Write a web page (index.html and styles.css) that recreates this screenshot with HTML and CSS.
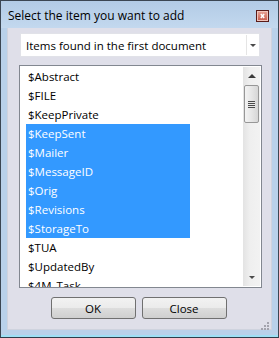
FILE: index.html
```html
<!DOCTYPE html>
<html lang="en">
<head>
    <meta charset="UTF-8">
    <title>Select the item you want to add</title>
    <link rel="stylesheet" href="styles.css">
</head>
<body>

    <div class="window">
        <div class="titlebar">
            <span class="title">Select the item you want to add</span>
            <span class="close-btn">
                <svg width="13" height="12" viewBox="0 0 13 12">
                    <path d="M4 3 L9 9 M9 3 L4 9" stroke="#fff" stroke-width="2.2"/>
                </svg>
            </span>
        </div>

        <div class="client">
            <div class="combo">
                <span class="combo-text">Items found in the first document</span>
                <span class="combo-btn"><span class="arrow-down"></span></span>
            </div>

            <div class="listbox">
                <ul class="items">
                    <li>$Abstract</li>
                    <li>$FILE</li>
                    <li>$KeepPrivate</li>
                    <li class="selected">$KeepSent</li>
                    <li class="selected">$Mailer</li>
                    <li class="selected">$MessageID</li>
                    <li class="selected">$Orig</li>
                    <li class="selected">$Revisions</li>
                    <li class="selected">$StorageTo</li>
                    <li>$TUA</li>
                    <li>$UpdatedBy</li>
                    <li>$4M_Task</li>
                </ul>
                <div class="scrollbar">
                    <div class="sb-btn"><span class="arrow-up"></span></div>
                    <div class="sb-thumb"><span class="grip-lines"></span></div>
                    <div class="sb-track"></div>
                    <div class="sb-btn"><span class="arrow-down"></span></div>
                </div>
            </div>

            <div class="buttons">
                <button type="button" class="btn">OK</button>
                <button type="button" class="btn">Close</button>
            </div>

            <span class="resize-grip">
                <svg width="9" height="9" viewBox="0 0 9 9">
                    <rect x="6" y="0" width="2" height="2" fill="#a3a3ad"/>
                    <rect x="3" y="3" width="2" height="2" fill="#a3a3ad"/>
                    <rect x="6" y="3" width="2" height="2" fill="#a3a3ad"/>
                    <rect x="0" y="6" width="2" height="2" fill="#a3a3ad"/>
                    <rect x="3" y="6" width="2" height="2" fill="#a3a3ad"/>
                    <rect x="6" y="6" width="2" height="2" fill="#a3a3ad"/>
                </svg>
            </span>
        </div>
    </div>

</body>
</html>
```

FILE: styles.css
```css
body {
    margin: 0;
    font-family: "Open Sans", "Noto Sans", sans-serif;
    font-size: 11px;
    background: #fff;
}
.window {
    width: 279px;
    height: 338px;
    box-sizing: border-box;
    border: 1px solid #3b4653;
    border-bottom-color: #2f3d4a;
    background: #b9d1ea;
    display: flex;
    flex-direction: column;
    box-shadow: inset 0 -2px 0 #9fe0f5;
}
.titlebar {
    height: 27px;
    display: flex;
    align-items: center;
    justify-content: space-between;
    padding: 0 9px 0 7px;
    background: linear-gradient(to bottom, #b2cbe6, #c3d8ee);
}
.title {
    font-size: 12px;
    color: #000;
    margin-top: 1px;
}
.close-btn {
    width: 11px;
    height: 10px;
    border: 1px solid #5a1c19;
    background: linear-gradient(to bottom, #e9a598, #c7594a);
    box-shadow: inset 0 0 0 1px #f0c4bb;
    display: flex;
    align-items: center;
    justify-content: center;
    margin-top: 2px;
}
.close-btn svg {
    width: 9px;
    height: 8px;
}
.client {
    position: relative;
    flex: 1;
    margin: 0 6px 7px 6px;
    background: #dfdfe9;
    border: 1px solid #cfd3de;
    border-top: none;
    display: flex;
    flex-direction: column;
}
.combo {
    height: 24px;
    margin: 5px 11px 0 12px;
    box-sizing: border-box;
    border: 1px solid #e1e2e8;
    background: #fff;
    display: flex;
    align-items: center;
}
.combo-text {
    flex: 1;
    padding-left: 5px;
    font-size: 11.5px;
}
.combo-btn {
    width: 12px;
    height: 20px;
    border-left: 1px solid #e5e5e5;
    display: flex;
    align-items: center;
    justify-content: center;
}
.arrow-down {
    width: 0;
    height: 0;
    border-left: 3px solid transparent;
    border-right: 3px solid transparent;
    border-top: 3px solid #4a4a4a;
}
.arrow-up {
    width: 0;
    height: 0;
    border-left: 4px solid transparent;
    border-right: 4px solid transparent;
    border-bottom: 4px solid #3a3a3a;
}
.listbox {
    height: 223px;
    margin: 8px 9px 0 11px;
    box-sizing: border-box;
    border: 1px solid #828790;
    background: #fff;
    padding: 1px;
    display: flex;
    overflow: hidden;
}
.items {
    list-style: none;
    margin: 0;
    padding: 0;
    flex: 1;
}
.items li {
    width: 162px;
    height: 19px;
    line-height: 19px;
    margin-left: 5px;
    padding-left: 2px;
    font-size: 11.5px;
    color: #000;
    white-space: nowrap;
}
.items li.selected {
    background: #3399ff;
    color: #fff;
}
.scrollbar {
    width: 17px;
    display: flex;
    flex-direction: column;
    background: linear-gradient(to right, #e3e3e3, #efefef 40%, #f2f2f2);
}
.sb-btn {
    height: 17px;
    display: flex;
    align-items: center;
    justify-content: center;
}
.sb-thumb {
    height: 36px;
    margin: 1px 1px 0 1px;
    border: 1px solid #979797;
    border-radius: 2px;
    background: linear-gradient(to right, #f3f3f3, #e6e6e6 50%, #d6d6d6);
    display: flex;
    align-items: center;
    justify-content: center;
}
.grip-lines {
    width: 7px;
    height: 7px;
    background: repeating-linear-gradient(to bottom, #4a4a4a 0 1px, #e8e8e8 1px 2px);
}
.sb-track {
    flex: 1;
}
.buttons {
    display: flex;
    justify-content: center;
    gap: 6px;
    margin-top: 9px;
    padding-right: 2px;
}
.btn {
    width: 85px;
    height: 22px;
    font-family: "Open Sans", "Noto Sans", sans-serif;
    font-size: 11.5px;
    color: #000;
    border: 1px solid #707070;
    border-radius: 3px;
    background: linear-gradient(to bottom, #f2f2f2 0%, #ebebeb 50%, #dddddd 51%, #cfcfcf 100%);
    padding: 0;
}
.resize-grip {
    position: absolute;
    right: 1px;
    bottom: 1px;
    width: 9px;
    height: 9px;
}
```
